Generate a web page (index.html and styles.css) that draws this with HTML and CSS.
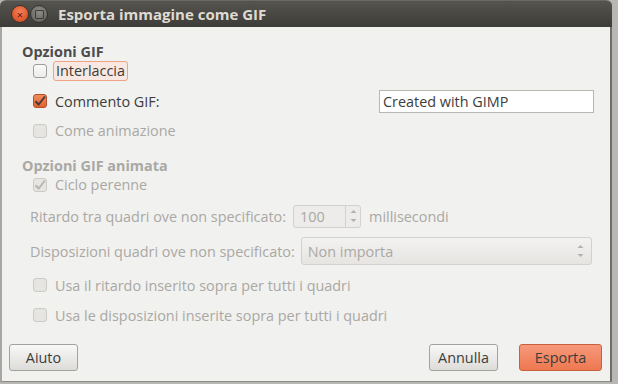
FILE: index.html
```html
<!DOCTYPE html>
<html lang="it">
<head>
    <meta charset="UTF-8">
    <title>Esporta immagine come GIF</title>
    <link rel="stylesheet" href="styles.css">
</head>
<body>
    <div class="window">
        <div class="titlebar">
            <span class="wbtn close">&#215;</span>
            <span class="wbtn mini"></span>
            <span class="title">Esporta immagine come GIF</span>
        </div>

        <div class="content">
            <div class="section">
                <h2 class="heading">Opzioni GIF</h2>
                <div class="row row-1">
                    <span class="check"></span>
                    <span class="label focus">Interlaccia</span>
                </div>
                <div class="row row-2">
                    <span class="check checked"><svg width="12" height="12" viewBox="0 0 12 12"><path d="M1.5 6.2 L4.6 9.5 L11 1.5" fill="none" stroke="#4b3a33" stroke-width="2"/></svg></span>
                    <span class="label">Commento GIF:</span>
                    <input class="entry" type="text" value="Created with GIMP">
                </div>
                <div class="row row-3 disabled">
                    <span class="check"></span>
                    <span class="label">Come animazione</span>
                </div>
            </div>

            <div class="section disabled">
                <h2 class="heading">Opzioni GIF animata</h2>
                <div class="row row-4">
                    <span class="check"><svg width="12" height="12" viewBox="0 0 12 12"><path d="M1.5 6.2 L4.6 9.5 L11 1.5" fill="none" stroke="#b9b6b1" stroke-width="2"/></svg></span>
                    <span class="label">Ciclo perenne</span>
                </div>
                <div class="row row-5 field">
                    <span class="label">Ritardo tra quadri ove non specificato:</span>
                    <div class="spin">
                        <span class="spin-value">100</span>
                        <span class="spin-arrows">
                            <svg width="7" height="14" viewBox="0 0 7 14"><path d="M0.5 4 L3.5 1 L6.5 4 Z M0.5 10 L3.5 13 L6.5 10 Z" fill="#b3b1ad"/></svg>
                        </span>
                    </div>
                    <span class="label">millisecondi</span>
                </div>
                <div class="row row-6 field">
                    <span class="label">Disposizioni quadri ove non specificato:</span>
                    <div class="combo">
                        <span>Non importa</span>
                        <span class="combo-arrows">
                            <svg width="7" height="14" viewBox="0 0 7 14"><path d="M0.5 4 L3.5 1 L6.5 4 Z M0.5 10 L3.5 13 L6.5 10 Z" fill="#b3b1ad"/></svg>
                        </span>
                    </div>
                </div>
                <div class="row row-7">
                    <span class="check"></span>
                    <span class="label">Usa il ritardo inserito sopra per tutti i quadri</span>
                </div>
                <div class="row row-8">
                    <span class="check"></span>
                    <span class="label">Usa le disposizioni inserite sopra per tutti i quadri</span>
                </div>
            </div>
        </div>

        <div class="footer">
            <button class="btn">Aiuto</button>
            <div class="spacer"></div>
            <button class="btn">Annulla</button>
            <button class="btn primary">Esporta</button>
        </div>
    </div>
</body>
</html>
```

FILE: styles.css
```css
* {
    margin: 0;
    padding: 0;
    box-sizing: border-box;
    font-family: "Open Sans", "Liberation Sans", sans-serif;
}
html, body {
    width: 618px;
    height: 384px;
    overflow: hidden;
    background: #b8b7b4;
}

.window {
    width: 612px;
    height: 382px;
    display: flex;
    flex-direction: column;
    background: #f1f1ef;
    border-left: 2px solid #a8a7a4;
    border-right: 2px solid #6e6d6a;
    border-bottom: 1px solid #8c8b88;
    border-radius: 6px 6px 0 0;
}

.titlebar {
    height: 27px;
    flex-shrink: 0;
    display: flex;
    align-items: center;
    padding-left: 11px;
    margin: 0 -2px 0 -2px;
    background: linear-gradient(#55544f, #3d3c38);
    border-radius: 6px 6px 0 0;
    border-top: 1px solid #6a6964;
}
.wbtn {
    width: 18px;
    height: 18px;
    border-radius: 50%;
    margin-right: 1px;
    display: flex;
    align-items: center;
    justify-content: center;
    font-size: 11px;
    line-height: 1;
    color: #5a1b0b;
}
.close {
    background: radial-gradient(circle at 50% 35%, #f47f55, #d5431a);
    border: 1px solid #34332f;
}
.mini {
    background: radial-gradient(circle at 50% 35%, #8d8c87, #5e5d58);
    border: 1px solid #34332f;
}
.mini::after {
    content: "";
    width: 7px;
    height: 7px;
    border: 1.5px solid #3c3b37;
    border-radius: 1px;
}
.title {
    margin-left: 9px;
    color: #dfdbd2;
    font-size: 15px;
    font-weight: 700;
}

.content {
    flex: 1;
    padding: 14px 0 0 20px;
    font-size: 14.4px;
    color: #3c3c3c;
}
.heading {
    font-size: 14.4px;
    font-weight: 700;
    line-height: 20px;
    margin: 1px 0 -1px;
    color: #4c4c4c;
}
.section.disabled {
    margin-top: 16px;
}
.section.disabled .heading {
    margin: 3px 0 -3px;
}
.disabled, .disabled .heading {
    color: #aaa8a4;
}

.row {
    display: flex;
    align-items: center;
    padding-left: 11px;
}
.row-1 { height: 20px; }
.row-2 { height: 40px; }
.row-3 { height: 19px; }
.row-4 { height: 23px; }
.row-5 { height: 40px; }
.row-6 { height: 30px; }
.row-7 { height: 38px; }
.row-8 { height: 22px; }
.field {
    padding-left: 8px;
}

.check {
    width: 14px;
    height: 14px;
    flex-shrink: 0;
    margin-right: 8px;
    border: 1px solid #9f9d99;
    border-radius: 3px;
    background: linear-gradient(#fafafa, #ececea);
    display: flex;
    align-items: center;
    justify-content: center;
}
.check.checked {
    background: linear-gradient(#f38b60, #e0632f);
    border-color: #b3502a;
}
.disabled .check {
    border-color: #cdcbc7;
    background: #e7e5e2;
}
.label {
    white-space: nowrap;
}
.focus {
    margin-left: -2px;
    padding: 0 2px;
    line-height: 18px;
    border: 1px solid #f0a384;
    border-radius: 3px;
    background: #f8e8e1;
}

.entry {
    margin-left: auto;
    margin-right: 16px;
    width: 215px;
    height: 23px;
    padding: 0 3px;
    border: 1px solid #b9b7b3;
    background: #fff;
    font-size: 14.4px;
    color: #3c3c3c;
    outline: none;
}

.spin {
    width: 68px;
    height: 23px;
    flex-shrink: 0;
    margin: 0 8px 0 7px;
    display: flex;
    border: 1px solid #d3d1cd;
    border-radius: 3px;
    background: #edecea;
}
.spin-value {
    flex: 1;
    padding-left: 6px;
    line-height: 21px;
}
.spin-arrows, .combo-arrows {
    width: 15px;
    display: flex;
    align-items: center;
    justify-content: center;
}
.spin-arrows {
    border-left: 1px solid #d3d1cd;
}
.combo {
    width: 291px;
    height: 28px;
    flex-shrink: 0;
    margin-left: 6px;
    padding-left: 6px;
    display: flex;
    align-items: center;
    justify-content: space-between;
    border: 1px solid #d3d1cd;
    border-radius: 3px;
    background: linear-gradient(#f3f2f0, #e6e5e2);
}
.combo-arrows {
    margin-right: 3px;
}

.footer {
    height: 47px;
    flex-shrink: 0;
    display: flex;
    align-items: flex-start;
    padding: 10px 8px 0 7px;
}
.spacer {
    flex: 1;
}
.btn {
    width: 69px;
    height: 27px;
    flex-shrink: 0;
    border: 1px solid #a4a29e;
    border-radius: 3px;
    background: linear-gradient(#f8f8f7, #dddcd9);
    font-size: 14.4px;
    color: #3c3c3c;
}
.btn.primary {
    width: 83px;
    margin-left: 21px;
    border-color: #c7623f;
    background: linear-gradient(#f6997a, #ed7850);
}
```
